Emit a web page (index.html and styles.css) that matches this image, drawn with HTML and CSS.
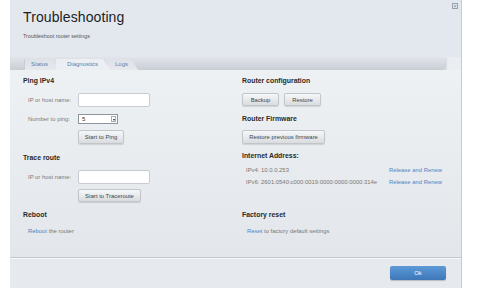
FILE: index.html
```html
<!DOCTYPE html>
<html lang="en">
<head>
    <meta charset="UTF-8">
    <title>Troubleshooting</title>
    <link rel="stylesheet" href="styles.css">
</head>
<body>
  <div class="panel">
      <div class="header">
          <h1>Troubleshooting</h1>
          <p class="subtitle">Troubleshoot router settings</p>
          <span class="close">&#215;</span>
      </div>
      <div class="tabbar">
          <div class="tab tab-status">Status</div>
          <div class="tab active">Diagnostics</div>
          <div class="tab tab-logs">Logs</div>
      </div>
      <div class="content">
          <div class="top-row">
              <div class="col">
                  <h3>Ping IPv4</h3>
                  <div class="field">
                      <label>IP or host name:</label>
                      <div class="input"></div>
                  </div>
                  <div class="field field-small">
                      <label>Number to ping:</label>
                      <div class="select"><span>5</span><span class="arrow"></span></div>
                  </div>
                  <div class="btn btn-ping">Start to Ping</div>
                  <h3 class="h-trace">Trace route</h3>
                  <div class="field">
                      <label>IP or host name:</label>
                      <div class="input"></div>
                  </div>
                  <div class="btn btn-trace">Start to Traceroute</div>
              </div>
              <div class="col">
                  <h3>Router configuration</h3>
                  <div class="btn-row">
                      <div class="btn">Backup</div>
                      <div class="btn">Restore</div>
                  </div>
                  <h3 class="h-firmware">Router Firmware</h3>
                  <div class="btn btn-firmware">Restore previous firmware</div>
                  <h3 class="h-address">Internet Address:</h3>
                  <div class="addr">
                      <span>IPv4: 10.0.0.253</span>
                      <a class="link">Release and Renew</a>
                  </div>
                  <div class="addr addr-v6">
                      <span>IPv6: 2601:0540:c000:0019:0000:0000:0000:314e</span>
                      <a class="link">Release and Renew</a>
                  </div>
              </div>
          </div>
          <div class="bottom-row">
              <div class="col">
                  <h3>Reboot</h3>
                  <p class="action"><a class="link">Reboot</a> the router</p>
              </div>
              <div class="col">
                  <h3>Factory reset</h3>
                  <p class="action"><a class="link">Reset</a> to factory default settings</p>
              </div>
          </div>
      </div>
      <div class="footer">
          <div class="btn-ok">Ok</div>
      </div>
  </div>
</body>
</html>
```

FILE: styles.css
```css
/* General */

*
{
    box-sizing: border-box;
    margin: 0;
    padding: 0;
    font-family: "Liberation Sans", Arial, sans-serif;
    color: #333;
}
body
{
    background-color: #fff;
    width: 493px;
    height: 300px;
    overflow: hidden;
}
.panel
{
    position: relative;
    margin-left: 10px;
    width: 452px;
    height: 288px;
    display: flex;
    flex-direction: column;
    border-right: 1px solid #c6ccd3;
    background-color: #eaedf1;
}

/* Header */

.header
{
    position: relative;
    height: 57px;
    padding: 9px 0 0 13px;
    background-color: #e3e8ef;
}
h1
{
    font-size: 14px;
    font-weight: 400;
    line-height: 16px;
    color: #1e1e1e;
    letter-spacing: 0.1px;
}
.subtitle
{
    margin-top: 8px;
    font-size: 5.4px;
    line-height: 7px;
    color: #555;
}
.close
{
    position: absolute;
    top: 3px;
    right: 3px;
    width: 6px;
    height: 6px;
    border: 1px solid #9aa0a8;
    font-size: 6px;
    line-height: 4px;
    text-align: center;
    color: #888;
}

/* Tabs */

.tabbar
{
    height: 13px;
    width: 436px;
    display: flex;
    align-items: flex-end;
    padding-left: 14px;
    background: linear-gradient(#e1e5ea, #c9ced5);
    border-radius: 0 0 4px 0;
    box-shadow: 1px 1px 1px rgba(0, 0, 0, 0.08);
}
.tab
{
    height: 11px;
    margin-right: -4px;
    font-size: 6px;
    line-height: 11px;
    color: #6183ab;
    background: linear-gradient(#dde2e8, #e6e9ee);
    clip-path: polygon(0 0, calc(100% - 7px) 0, 100% 100%, 0 100%);
}
.tab-status
{
    padding: 0 12px 0 6px;
    border-left: 1px solid #c9ced5;
}
.tab.active
{
    padding: 0 12px 0 11px;
    background: #ebeef2;
    position: relative;
    z-index: 1;
}
.tab-logs
{
    padding: 0 10px 0 9px;
}

/* Content */

.content
{
    flex: 1;
    padding: 6px 0 0 13px;
    background: linear-gradient(#eef1f4, #e3e6ea);
    border-bottom: 1px solid #c4c8ce;
}
.top-row,
.bottom-row
{
    display: grid;
    grid-template-columns: 219px 1fr;
}
.top-row
{
    height: 134px;
}
h3
{
    font-size: 6.9px;
    font-weight: 700;
    line-height: 10px;
    color: #2a2a2a;
}
.field
{
    display: flex;
    align-items: center;
    height: 14px;
    margin-top: 7px;
}
.field-small
{
    height: 10px;
}
.field label
{
    width: 55px;
    padding-left: 5px;
    font-size: 5.9px;
    color: #7a7a7a;
}
.input
{
    width: 72px;
    height: 14px;
    background-color: #fff;
    border: 1px solid #c8ccd2;
    border-radius: 2px;
}
.select
{
    display: flex;
    justify-content: space-between;
    align-items: center;
    width: 40px;
    height: 10px;
    padding: 0 1px 0 3px;
    background-color: #fff;
    border: 1px solid #8e949b;
    font-size: 6px;
}
.select span
{
    font-size: 6px;
}
.select .arrow
{
    width: 5px;
    height: 6px;
    border: 1px solid #aaa;
    position: relative;
}
.select .arrow::after
{
    content: "";
    position: absolute;
    left: 0.5px;
    top: 1.5px;
    border-left: 1.5px solid transparent;
    border-right: 1.5px solid transparent;
    border-top: 2px solid #222;
}

/* Buttons */

.btn
{
    display: inline-block;
    height: 14px;
    padding: 0 7px;
    font-size: 5.9px;
    line-height: 13px;
    color: #3c4650;
    text-align: center;
    background: linear-gradient(#f6f7f8, #d9dcdf);
    border: 1px solid #c2c6cb;
    border-radius: 2px;
    box-shadow: 0 1px 1px rgba(0, 0, 0, 0.12);
}
.btn-ping
{
    display: block;
    width: 46px;
    padding: 0;
    margin: 6px 0 0 55px;
}
.btn-trace
{
    display: block;
    width: 63px;
    height: 13px;
    padding: 0;
    margin: 5px 0 0 55px;
}
.h-trace
{
    margin-top: 9px;
}
.btn-row
{
    display: flex;
    gap: 5px;
    margin-top: 7px;
}
.btn-row .btn
{
    width: 37px;
    height: 13px;
    padding: 0;
}
.h-firmware
{
    margin-top: 8px;
}
.btn-firmware
{
    display: block;
    width: 83px;
    padding: 0;
    margin-top: 6px;
}
.h-address
{
    margin-top: 7px;
}
.addr
{
    display: flex;
    justify-content: space-between;
    width: 200px;
    padding-left: 4px;
    margin-top: 4px;
    line-height: 10px;
}
.addr span
{
    font-size: 5.9px;
    color: #777;
}
.addr-v6
{
    margin-top: 2px;
}
.link
{
    font-size: 5.9px;
    color: #4f84c2;
}
.action
{
    margin-top: 6px;
    padding-left: 5px;
    font-size: 5.9px;
    line-height: 10px;
    color: #777;
}

/* Footer */

.footer
{
    height: 30px;
    display: flex;
    justify-content: flex-end;
    align-items: flex-start;
    padding: 7px 15px 0 0;
    background-color: #e6e9ed;
    border-top: 1px solid #f7f8fa;
}
.btn-ok
{
    width: 56px;
    height: 14px;
    font-size: 5.9px;
    line-height: 14px;
    text-align: center;
    color: #fff;
    background: linear-gradient(#5c9ad6, #3d77b8);
    border-radius: 2px;
    box-shadow: 0 1px 1px rgba(0, 0, 0, 0.2);
}
```
